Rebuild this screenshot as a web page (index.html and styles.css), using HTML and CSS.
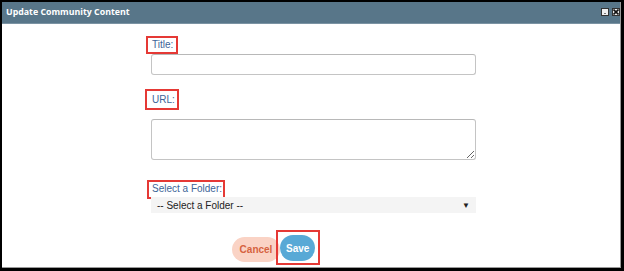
FILE: index.html
```html
<!DOCTYPE html>
<html lang="en">
<head>
    <meta charset="UTF-8">
    <meta name="viewport" content="width=device-width, initial-scale=1.0">
    <title>Update Community Content</title>
    <link rel="stylesheet" href="styles.css">
</head>
<body>
    <div class="frame">
        <div class="dialog">
            <div class="titlebar">
                <span class="title">Update Community Content</span>
                <div class="controls">
                    <span class="ctrl ctrl-min"><span class="dot"></span></span>
                    <span class="ctrl ctrl-close">
                        <svg width="6" height="6" viewBox="0 0 6 6"><path d="M0.5 0.5L5.5 5.5M5.5 0.5L0.5 5.5" stroke="#111" stroke-width="1.6"/></svg>
                    </span>
                </div>
            </div>
            <div class="form">
                <label class="mark mark-title" for="title">Title:</label>
                <input type="text" id="title" class="field">
                <label class="mark mark-url" for="url">URL:</label>
                <textarea id="url" class="field area"></textarea>
                <label class="mark mark-folder" for="folder">Select a Folder:</label>
                <div class="select" id="folder">
                    <span>-- Select a Folder --</span>
                    <span class="arrow">&#9660;</span>
                </div>
                <div class="actions">
                    <button class="btn cancel">Cancel</button>
                    <span class="mark-save"><button class="btn save">Save</button></span>
                </div>
            </div>
        </div>
    </div>
</body>
</html>
```

FILE: styles.css
```css
body {
    margin: 0;
    font-family: "Liberation Sans", Arial, sans-serif;
    background: #000;
}
.frame {
    width: 624px;
    height: 271px;
    box-sizing: border-box;
    padding: 2px 3px 3px 2px;
    background: #000;
}
.dialog {
    height: 100%;
    box-sizing: border-box;
    background: #fff;
    border-right: 1px solid #9a9a9a;
    border-bottom: 1px solid #9a9a9a;
}
.titlebar {
    height: 22px;
    box-sizing: border-box;
    background: #587689;
    border-bottom: 1px solid #7b93a3;
    display: flex;
    align-items: center;
    justify-content: space-between;
    padding: 0 0 0 4px;
}
.title {
    font-family: "Open Sans", sans-serif;
    font-weight: bold;
    font-size: 8.8px;
    color: #fff;
    margin-top: -1px;
}
.controls {
    display: flex;
    gap: 3px;
    margin-top: -1px;
}
.ctrl {
    width: 8px;
    height: 8px;
    box-sizing: border-box;
    border: 1px solid #333;
    background: #f0f0f0;
    display: flex;
    align-items: center;
    justify-content: center;
}
.ctrl-min {
    align-items: flex-end;
    padding-bottom: 1px;
}
.dot {
    width: 2px;
    height: 1px;
    background: #777;
}
.form {
    width: 325px;
    margin-left: 149px;
    display: flex;
    flex-direction: column;
    align-items: flex-start;
}
.mark {
    font-size: 10px;
    color: #3d6598;
    border: 2px solid #e53935;
    margin-left: -5px;
    line-height: 12px;
}
.mark-title {
    margin-top: 12px;
    padding: 1px 3px 1px 4px;
}
.mark-url {
    margin-top: 14px;
    padding: 3px 2px 2px 5px;
    margin-left: -6px;
}
.mark-folder {
    margin-top: 20px;
    padding: 1px 1px 2px 3px;
    margin-left: -4px;
}
.field {
    width: 325px;
    height: 21px;
    box-sizing: border-box;
    border: 1px solid #c4c4c4;
    border-top-color: #b8b8b8;
    border-radius: 3px;
    margin: 0;
    font-family: inherit;
}
.area {
    height: 41px;
    margin-top: 9px;
    resize: vertical;
}
.select {
    width: 325px;
    height: 16px;
    margin-top: -2px;
    box-sizing: border-box;
    background: #f4f4f4;
    display: flex;
    align-items: center;
    justify-content: space-between;
    padding: 0 6px 0 6px;
    font-size: 10px;
    color: #222;
}
.arrow {
    font-size: 8px;
}
.actions {
    display: flex;
    align-items: center;
    margin-top: 17px;
    padding-left: 81px;
}
.btn {
    border: none;
    border-radius: 13px;
    font-family: inherit;
    font-weight: bold;
    font-size: 10px;
    cursor: pointer;
}
.cancel {
    width: 48px;
    height: 25px;
    background: #fad3c5;
    color: #d6623f;
    margin-top: 4px;
}
.mark-save {
    display: block;
    margin-left: -4px;
    padding: 3px 3px 2px 2px;
    border: 2px solid #e53935;
}
.save {
    display: block;
    width: 35px;
    height: 26px;
    background: #58a9d6;
    color: #fff;
}
```
